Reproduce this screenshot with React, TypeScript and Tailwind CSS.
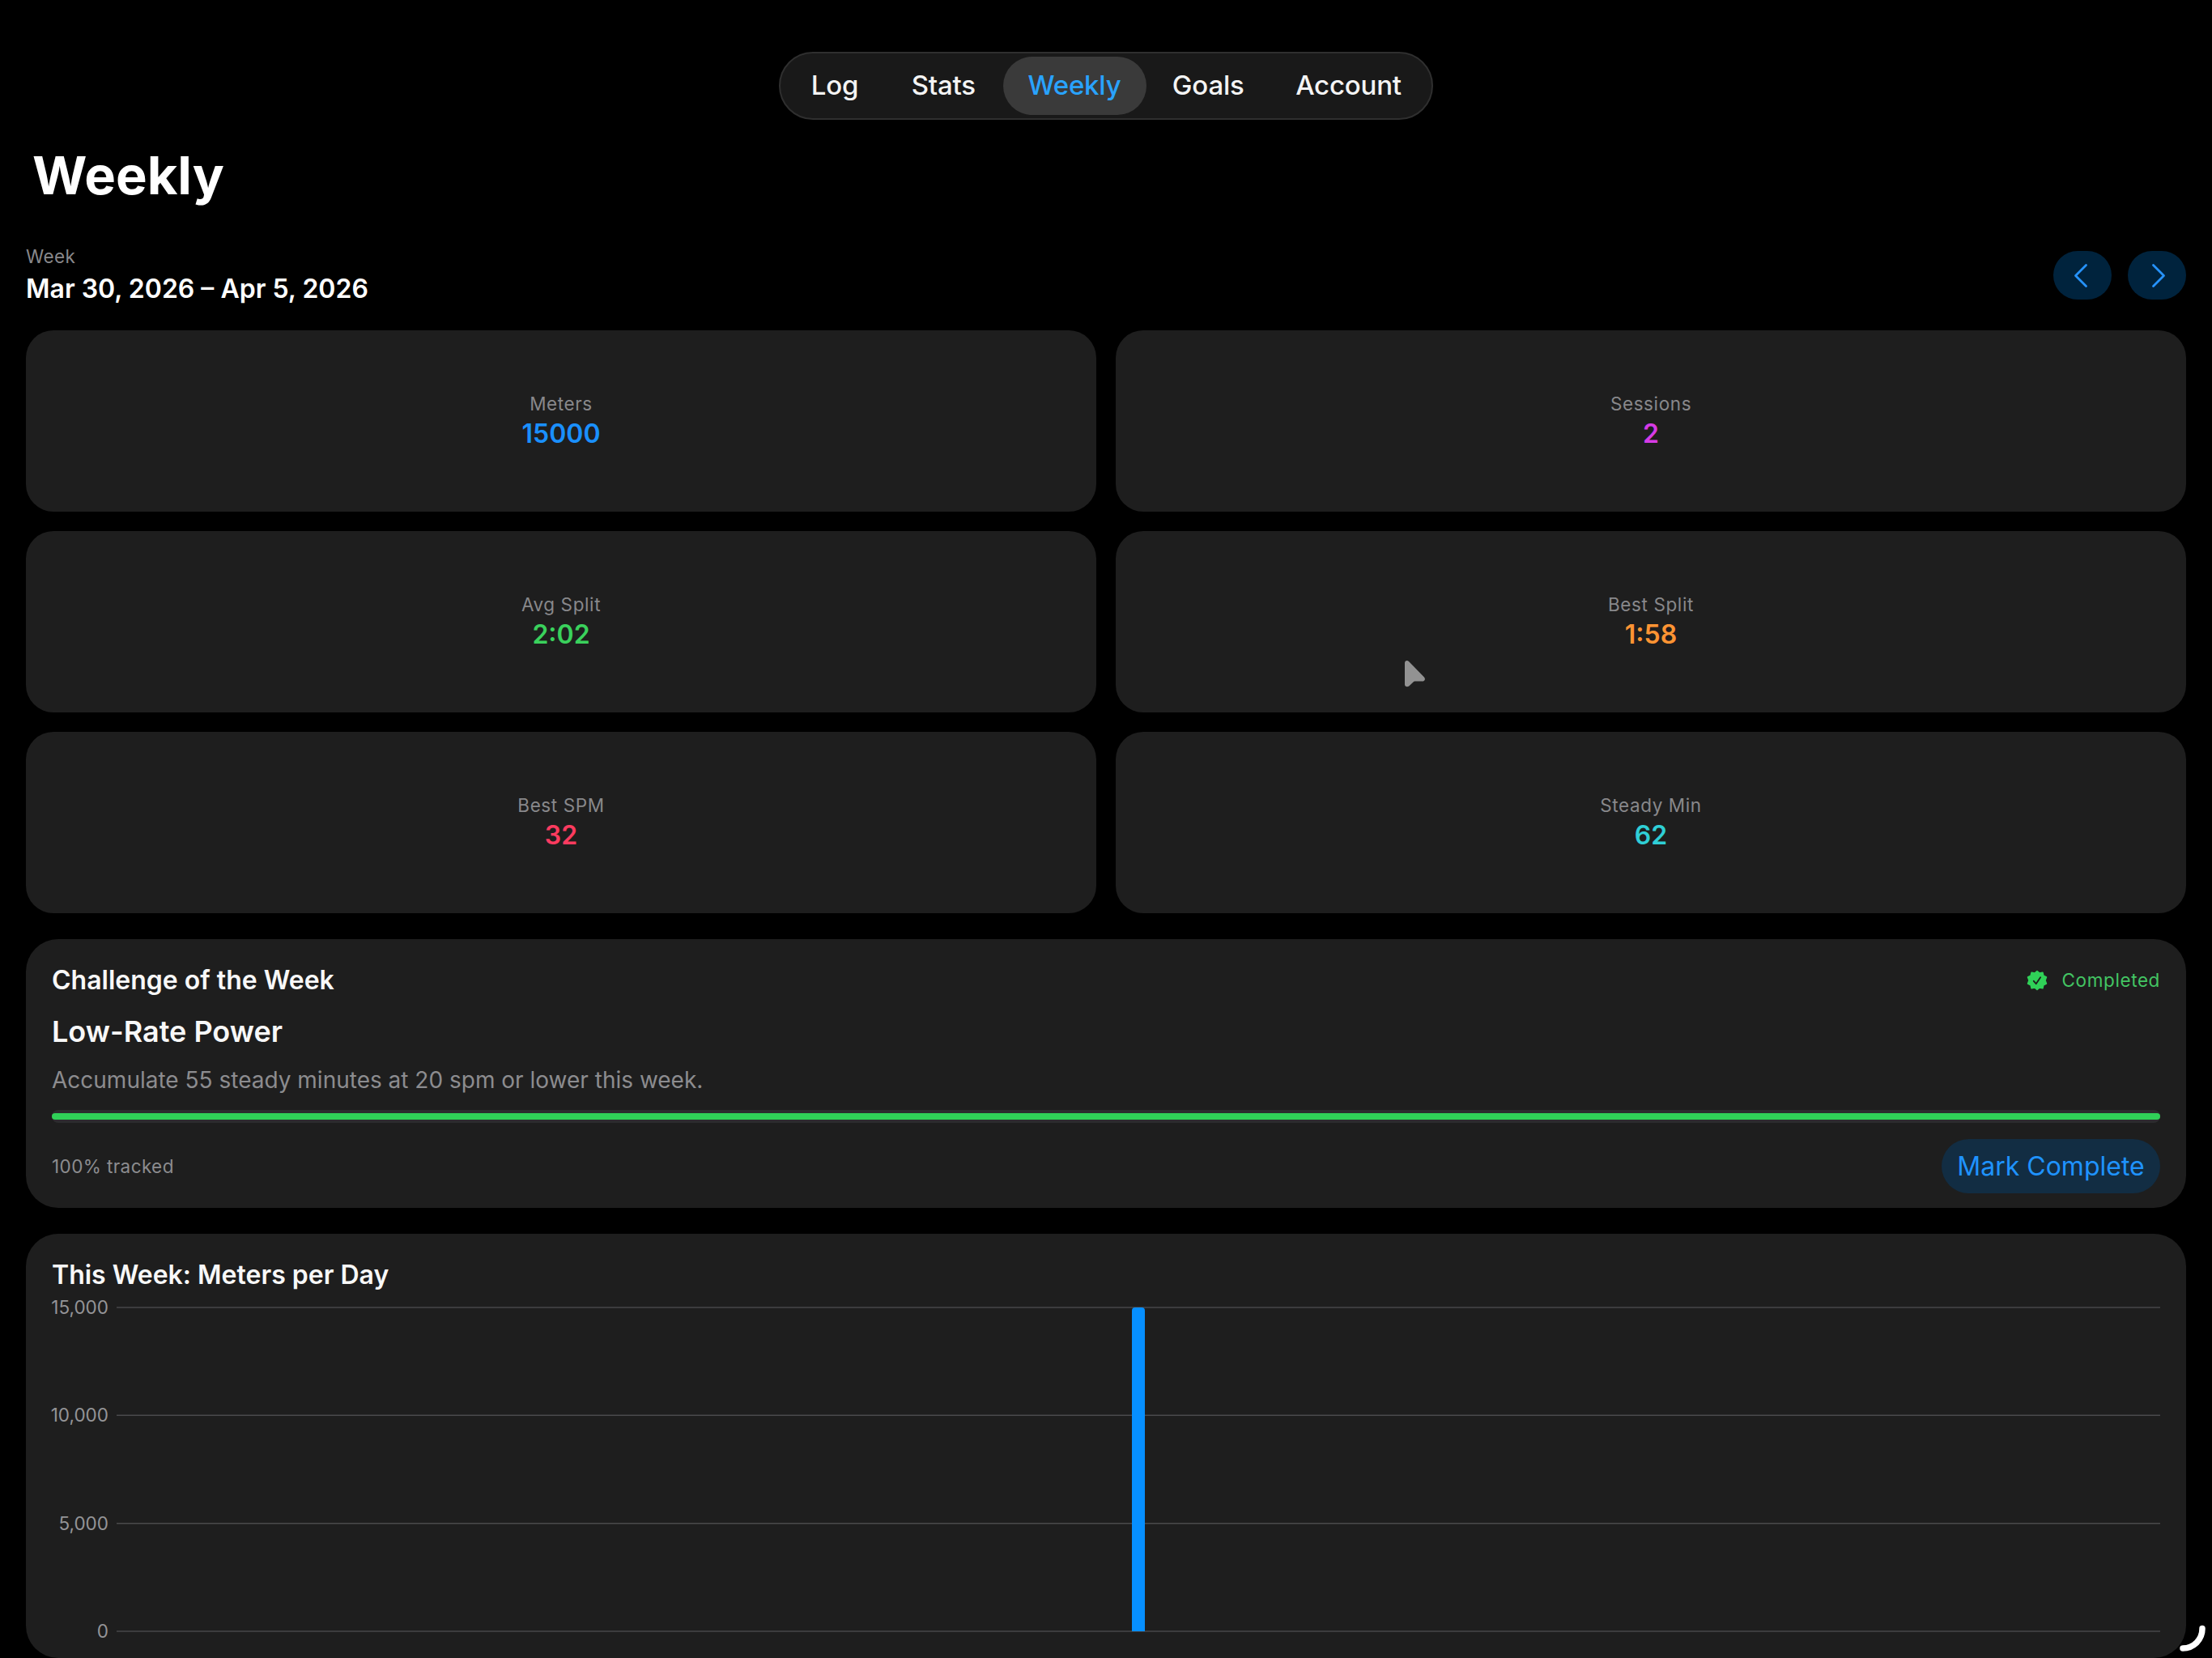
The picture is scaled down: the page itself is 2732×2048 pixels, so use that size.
import { clsx } from 'clsx';

const tabs = [
  { label: 'Log', width: 'w-[122px]' },
  { label: 'Stats', width: 'w-[145px]' },
  { label: 'Weekly', width: 'w-[177px]' },
  { label: 'Goals', width: 'w-[152px]' },
  { label: 'Account', width: 'w-[193px]' },
];

const stats = [
  { label: 'Meters', value: '15000', color: 'text-[#1a90ff]' },
  { label: 'Sessions', value: '2', color: 'text-[#d63be6]' },
  { label: 'Avg Split', value: '2:02', color: 'text-[#3ad15c]' },
  { label: 'Best Split', value: '1:58', color: 'text-[#ff9433]' },
  { label: 'Best SPM', value: '32', color: 'text-[#fb3b5f]' },
  { label: 'Steady Min', value: '62', color: 'text-[#2fcfd6]' },
];

const ticks = ['15,000', '10,000', '5,000', '0'];

function TabBar() {
  return (
    <nav className="mx-auto flex h-[88px] w-[808px] items-center justify-between rounded-full border-2 border-[#2f2f2f] bg-[#191919] px-1.5">
      {tabs.map(({ label, width }) => (
        <button
          key={label}
          className={clsx(
            'h-[72px] rounded-full text-[33px] font-medium tracking-[-0.2px]',
            width,
            label === 'Weekly' ? 'bg-[#3a3a3a] text-[#29a3ff]' : 'text-[#f4f4f4]',
          )}
        >
          {label}
        </button>
      ))}
    </nav>
  );
}

function StepButton({ points }: { points: string }) {
  return (
    <button className="flex h-[60px] w-[72px] items-center justify-center rounded-full bg-[#00233d]">
      <svg width="72" height="60" viewBox="0 0 72 60" fill="none" stroke="#2693ff" strokeWidth="2.8" strokeLinecap="round" strokeLinejoin="round">
        <polyline points={points} />
      </svg>
    </button>
  );
}

function StatCard({ label, value, color }: { label: string; value: string; color: string }) {
  return (
    <div className="flex h-56 flex-col items-center justify-center gap-[3px] rounded-[34px] bg-[#1e1e1e]">
      <span className="text-[22.5px] leading-7 tracking-[0.6px] text-[#88888b]">{label}</span>
      <span className={clsx('text-[32px] leading-10 font-semibold', color)}>{value}</span>
    </div>
  );
}

function SealIcon() {
  return (
    <svg width="26" height="26" viewBox="0 0 26 26">
      <path
        d="M13 1.5l3 2.6 3.9-.9 1 3.9 3.6 1.9-1.5 4 1.5 4-3.6 1.9-1 3.9-3.9-.9-3 2.6-3-2.6-3.9.9-1-3.9L1.5 17 3 13 1.500 9l3.600-1.900 1-3.900 3.900.900z"
        fill="#30d158"
        stroke="#30d158"
        strokeWidth="1.500"
        strokeLinejoin="round"
      />
      <path d="M8.800 13.800l2.900 3.400 5.400-8" fill="none" stroke="#1e1e1e" strokeWidth="1.800" strokeLinecap="round" strokeLinejoin="round" />
    </svg>
  );
}

function ChallengeCard() {
  return (
    <section className="mt-8 flex h-[346px] flex-col rounded-[40px] bg-[#1e1e1e] px-8 pt-[31px]">
      <div className="flex h-10 items-center justify-between">
        <h2 className="text-[32px] leading-10 font-semibold text-[#f8f8f8]">Challenge of the Week</h2>
        <div className="flex items-center gap-[18px]">
          <SealIcon />
          <span className="text-[22.5px] leading-7 tracking-[0.6px] text-[#43c563]">Completed</span>
        </div>
      </div>
      <h3 className="mt-[19px] text-[36px] leading-[48px] font-semibold text-[#f8f8f8]">Low-Rate Power</h3>
      <p className="mt-[18px] text-[28px] leading-9 text-[#8c8c8f]">
        Accumulate 55 steady minutes at 20 spm or lower this week.
      </p>
      <div className="mt-[19px] flex h-4 items-center rounded-full bg-[#2c2c2e]">
        <div className="h-2 w-full rounded-full bg-[#30d158]" />
      </div>
      <div className="mt-5 flex items-center justify-between">
        <span className="text-[22.5px] leading-7 tracking-[0.4px] text-[#8c8c8f]">100% tracked</span>
        <button className="h-[67px] w-[270px] rounded-full bg-[#122d43] text-[32px] text-[#1f93ff]">Mark Complete</button>
      </div>
    </section>
  );
}

function MetersChart() {
  return (
    <section className="mt-8 h-[524px] shrink-0 rounded-[40px] bg-[#1e1e1e] px-8 pt-[31px]">
      <h2 className="text-[32px] leading-10 font-semibold text-[#f8f8f8]">This Week: Meters per Day</h2>
      <div className="mt-[5px] flex h-[430px] gap-2.5">
        <div className="flex w-[70px] flex-col items-end justify-between">
          {ticks.map((tick) => (
            <span key={tick} className="text-[22.5px] leading-[30px] text-[#949497]">
              {tick}
            </span>
          ))}
        </div>
        <svg width="2524" height="430" viewBox="0 0 2524 430">
          <rect y="14" width="2524" height="2" fill="#3c3c3e" />
          <rect y="147.500" width="2524" height="1.500" fill="#4a4a4c" />
          <rect y="281" width="2524" height="1.500" fill="#4a4a4c" />
          <rect y="414" width="2524" height="2" fill="#3c3c3e" />
          <path d="M1254 415V19a4 4 0 0 1 4-4h8a4 4 0 0 1 4 4v396z" fill="#068fff" />
        </svg>
      </div>
    </section>
  );
}

export default function App() {
  return (
    <div className="relative flex h-[2048px] w-[2732px] flex-col overflow-hidden bg-black px-8 pt-16 font-['Inter',sans-serif]">
      <TabBar />
      <h1 className="mt-[29px] pl-2 text-[65px] leading-[80px] font-bold text-white">Weekly</h1>

      <div className="mt-[46px] flex h-[76px] items-center justify-between">
        <div className="flex flex-col gap-1.5">
          <span className="text-[22.5px] leading-7 tracking-[0.4px] text-[#88888b]">Week</span>
          <span className="text-[32px] leading-10 font-semibold text-white">Mar 30, 2026 – Apr 5, 2026</span>
        </div>
        <div className="flex gap-5">
          <StepButton points="40.500,17.500 27.500,30.500 40.500,43.500" />
          <StepButton points="31.500,17.500 44.500,30.500 31.500,43.500" />
        </div>
      </div>

      <div className="mt-[31px] grid grid-cols-2 gap-6">
        {stats.map((stat) => (
          <StatCard key={stat.label} {...stat} />
        ))}
      </div>

      <ChallengeCard />
      <MetersChart />

      {/* pointer */}
      <svg className="absolute top-[814px] left-[1733px]" width="30" height="38" viewBox="0 0 30 38">
        <path
          d="M2 5C2 2 5 1.200 7 3L26 22.500C28 24.800 26.500 27.600 24 27.600H15.500C14 27.600 13 28 12 29L7.500 33.200C5 35.500 2 34 2 31.500Z"
          fill="#929292"
        />
      </svg>

      {/* window resize handle */}
      <svg className="absolute right-0 bottom-0" width="48" height="48" viewBox="0 0 48 48">
        <path d="M36 11.500A24 24 0 0 1 12 36" fill="none" stroke="#fff" strokeWidth="7.500" strokeLinecap="round" />
      </svg>
    </div>
  );
}
